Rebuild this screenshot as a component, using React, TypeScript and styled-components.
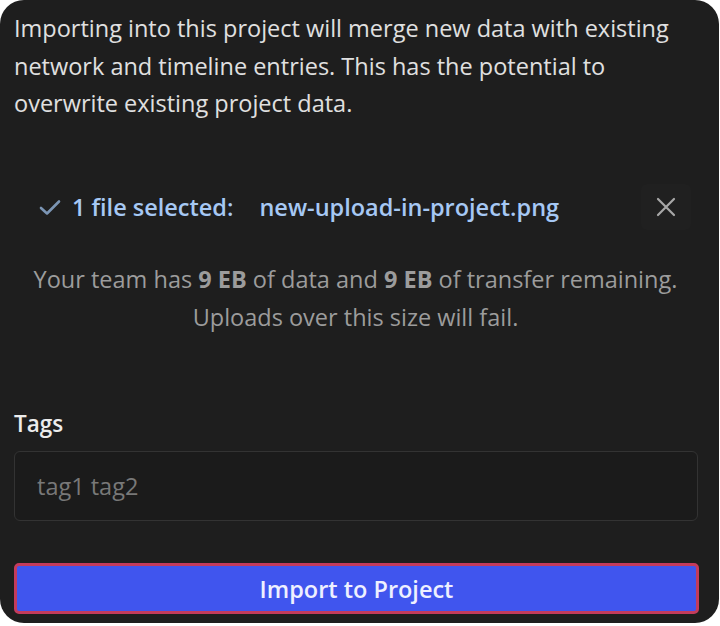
import React from "react";
import styled, { createGlobalStyle } from "styled-components";

const Global = createGlobalStyle`
  html, body { margin: 0; padding: 0; background: #ffffff; }
  body { font-family: "Open Sans", "Noto Sans", sans-serif; }
  * { box-sizing: border-box; }
`;

const Panel = styled.div`
  width: 719px;
  height: 623px;
  background: #1e1e1e;
  border-radius: 24px;
  padding: 10px 22px 9px 14px;
  display: flex;
  flex-direction: column;
  color: #e2e2e2;
`;

const Intro = styled.p`
  margin: 0;
  font-size: 23.5px;
  line-height: 37.5px;
  color: #e0e0e0;
`;

const FileRow = styled.div`
  margin-top: 61px;
  display: flex;
  align-items: center;
  height: 46px;
  padding-left: 24px;
`;

const Check = styled.svg`
  width: 24px;
  height: 24px;
  flex: none;
  margin-right: 10px;
`;

const SelectedLabel = styled.span`
  font-size: 23.5px;
  font-weight: 600;
  color: #a6c8f4;
  margin-right: 26px;
`;

const FileName = styled.span`
  font-size: 23.5px;
  font-weight: 600;
  color: #a6c8f4;
  flex: 1;
`;

const CloseButton = styled.button`
  width: 50px;
  height: 46px;
  border: none;
  background: #202020;
  border-radius: 6px;
  display: flex;
  align-items: center;
  justify-content: center;
  padding: 0;
  margin-right: 6px;
`;

const Quota = styled.p`
  margin: 30px 0 0;
  text-align: center;
  font-size: 23.5px;
  line-height: 38px;
  color: #9c9c9c;
  b { font-weight: 700; }
`;

const Label = styled.div`
  margin-top: 73px;
  font-size: 22.5px;
  font-weight: 600;
  color: #ececec;
  line-height: 30px;
`;

const Input = styled.input`
  margin-top: 12px;
  height: 71px;
  width: 684px;
  background: #1b1b1b;
  border: 1px solid #333333;
  border-radius: 6px;
  padding: 0 22px;
  font-family: inherit;
  font-size: 23.5px;
  color: #e0e0e0;
  outline: none;
  &::placeholder { color: #787878; }
`;

const Submit = styled.button`
  margin-top: 42px;
  width: 685px;
  height: 51px;
  background: #4055ee;
  border: 3px solid #c43b5c;
  border-radius: 5px;
  color: #eef0ff;
  font-family: inherit;
  font-size: 23.5px;
  font-weight: 600;
  display: flex;
  align-items: center;
  justify-content: center;
`;

export default function App() {
  return (
    <>
      <Global />
      <Panel>
        <Intro>
          Importing into this project will merge new data with existing network and timeline
          entries. This has the potential to overwrite existing project data.
        </Intro>
        <FileRow>
          <Check viewBox="0 0 24 24" fill="none" stroke="#7b95b4" strokeWidth="2.6" strokeLinecap="round" strokeLinejoin="round">
            <path d="M3 13 L9 18.5 L21 6.5" />
          </Check>
          <SelectedLabel>1 file selected:</SelectedLabel>
          <FileName>new-upload-in-project.png</FileName>
          <CloseButton aria-label="Remove file">
            <svg width="22" height="22" viewBox="0 0 22 22" fill="none" stroke="#a8a8a8" strokeWidth="2.2" strokeLinecap="round">
              <path d="M3 3 L19 19 M19 3 L3 19" />
            </svg>
          </CloseButton>
        </FileRow>
        <Quota>
          Your team has <b>9 EB</b> of data and <b>9 EB</b> of transfer remaining.
          <br />
          Uploads over this size will fail.
        </Quota>
        <Label>Tags</Label>
        <Input placeholder="tag1 tag2" />
        <Submit>Import to Project</Submit>
      </Panel>
    </>
  );
}
